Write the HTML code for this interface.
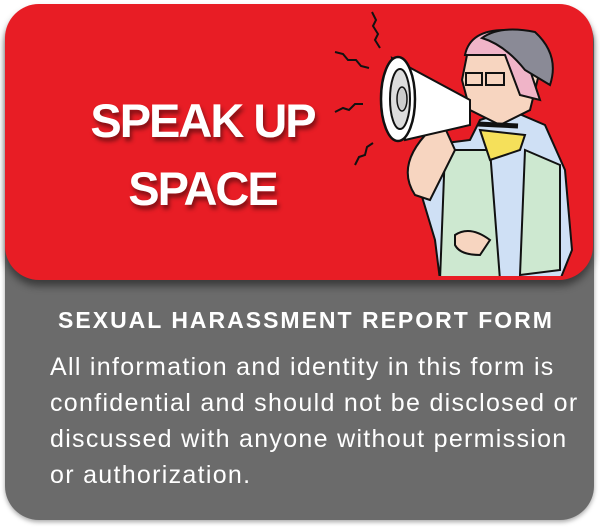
<!DOCTYPE html>
<html><head><style>
body{margin:0;width:600px;height:528px;background:#fff;position:relative;overflow:hidden;font-family:"Liberation Sans",sans-serif}
.gray{position:absolute;left:5px;top:8px;width:589px;height:512px;background:#6b6b6b;border-radius:34px;box-shadow:0 2px 5px rgba(0,0,0,.35)}
.red{position:absolute;left:5px;top:4px;width:588px;height:276px;background:#e81d25;border-radius:34px;box-shadow:0 6px 8px rgba(0,0,0,.45);overflow:hidden}
.big{position:absolute;left:0;width:395px;text-align:center;color:#fff;font-weight:bold;font-size:47px;letter-spacing:-2px;line-height:50px;text-shadow:2px 4px 4px rgba(0,0,0,.45)}
.t{position:absolute;left:0;width:612px;text-align:center;top:307px;color:#fff;font-weight:bold;font-size:23px;letter-spacing:2px}
.b{position:absolute;left:50px;top:349px;color:#fff;font-size:25px;letter-spacing:1.3px;line-height:36px;width:560px;white-space:nowrap}
</style></head><body>
<div class="gray"></div>
<div class="red">
<svg width="588" height="276" style="position:absolute;left:-5px;top:-4px">
<g fill="none" stroke="#111" stroke-width="2">
<path d="M372 12 l4 8 -3 6 5 8 -3 6 5 8"/>
<path d="M335 52 l8 2 5 6 8 0 5 6 8 2"/>
<path d="M335 112 l8 -4 6 2 6 -6 8 0"/>
<path d="M355 165 l4 -8 6 -2 2 -8 6 -4"/>
</g>
<path d="M420 190 Q400 170 430 145 L470 140 L480 120 L510 110 L545 125 L565 170 L572 250 L560 280 L440 280 L435 240 Z" fill="#cfe0f5" stroke="#111" stroke-width="2"/>
<path d="M445 150 L490 150 L500 280 L440 280 Z" fill="#cde8d0" stroke="#111" stroke-width="2"/>
<path d="M525 150 L560 165 L560 270 L520 275 Z" fill="#cde8d0" stroke="#111" stroke-width="2"/>
<path d="M480 130 L525 135 L520 150 L490 160 Z" fill="#f5e05a" stroke="#111" stroke-width="2"/>
<path d="M415 195 Q395 165 430 130 L445 128 L455 150 L430 200 Z" fill="#f7d5c0" stroke="#111" stroke-width="2"/>
<path d="M455 235 Q470 225 490 240 L480 255 Q460 255 455 245 Z" fill="#f7d5c0" stroke="#111" stroke-width="2"/>
<path d="M468 50 Q480 25 520 35 L540 70 L530 110 L500 125 L470 110 L462 80 Z" fill="#f7d5c0" stroke="#111" stroke-width="2"/>
<path d="M465 55 Q470 30 505 30 L525 55 L540 100 L520 95 L505 55 Z" fill="#f0b4c8" stroke="#111" stroke-width="2"/>
<path d="M482 38 Q500 25 535 32 Q560 55 550 85 L525 70 Q505 45 482 38Z" fill="#8a8a96" stroke="#111" stroke-width="2"/>
<rect x="466" y="73" width="16" height="12" fill="none" stroke="#111" stroke-width="2"/>
<rect x="486" y="73" width="18" height="12" fill="none" stroke="#111" stroke-width="2"/>
<path d="M478 124 L518 126" stroke="#111" stroke-width="5"/>
<path d="M392 58 L470 100 L470 125 L405 140 Z" fill="#fff" stroke="#111" stroke-width="2"/>
<ellipse cx="398" cy="99" rx="17" ry="42" fill="#fff" stroke="#111" stroke-width="2.5"/>
<ellipse cx="400" cy="99" rx="10" ry="30" fill="#ddd" stroke="#111" stroke-width="2"/>
<ellipse cx="402" cy="99" rx="5" ry="12" fill="#ccc" stroke="#111" stroke-width="1.5"/>
</svg>
<div class="big" style="top:92px">SPEAK UP</div>
<div class="big" style="top:160px">SPACE</div>
</div>
<div class="t">SEXUAL HARASSMENT REPORT FORM</div>
<div class="b">All information and identity in this form is<br>confidential and should not be disclosed or<br>discussed with anyone without permission<br>or authorization.</div>
</body></html>
